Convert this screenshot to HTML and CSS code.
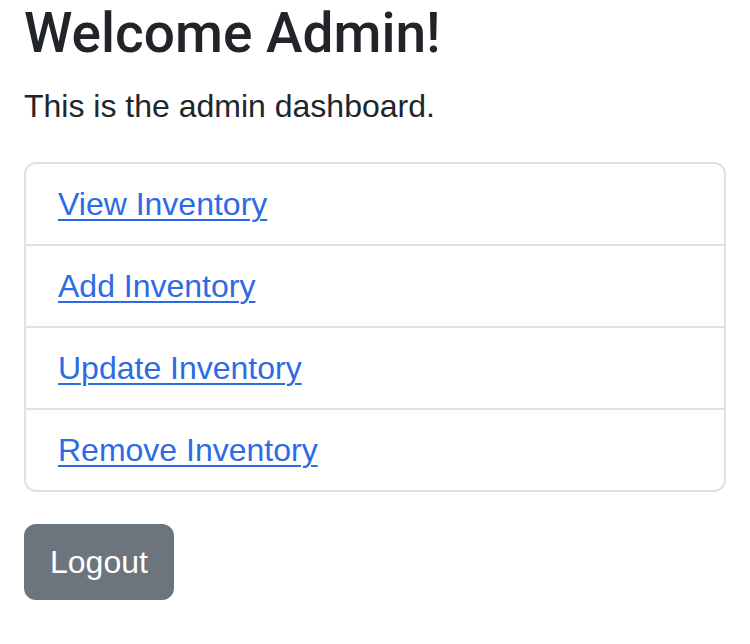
FILE: index.html
```html
<!DOCTYPE html>
<html lang="en">
<head>
<meta charset="utf-8">
<title>Admin Dashboard</title>
<link rel="stylesheet" href="styles.css">
</head>
<body>
<div class="container">
  <h1 class="title">Welcome Admin!</h1>
  <p class="lead-text">This is the admin dashboard.</p>
  <ul class="list-group">
    <li class="list-item"><a href="#">View Inventory</a></li>
    <li class="list-item"><a href="#">Add Inventory</a></li>
    <li class="list-item"><a href="#">Update Inventory</a></li>
    <li class="list-item"><a href="#">Remove Inventory</a></li>
  </ul>
  <a href="#" class="btn-logout">Logout</a>
</div>
</body>
</html>
```

FILE: styles.css
```css
* { box-sizing: border-box; }
html, body {
  margin: 0;
  padding: 0;
  background: #fff;
}
body {
  font-family: "Liberation Sans", Arial, sans-serif;
  font-size: 32px;
  line-height: 48px;
  color: #212529;
}
.container {
  padding: 0 24px;
}
.title {
  margin: 0 0 16px;
  font-family: Roboto, "Liberation Sans", sans-serif;
  font-size: 55px;
  line-height: 66px;
  font-weight: 500;
}
.lead-text {
  margin: 0 0 32px;
}
.list-group {
  list-style: none;
  margin: 0 0 32px;
  padding: 0;
  border: 2px solid #dee2e6;
  border-radius: 12px;
}
.list-item {
  padding: 16px 32px;
  border-top: 2px solid #dee2e6;
}
.list-item:first-child {
  border-top: none;
}
.list-item a {
  color: #2d6be4;
  text-decoration: underline;
  text-decoration-thickness: 2px;
  text-underline-offset: 4px;
}
.btn-logout {
  display: inline-block;
  padding: 12px 24px;
  border: 2px solid #6c757d;
  border-radius: 12px;
  background: #6c757d;
  color: #fff;
  text-decoration: none;
}
```
